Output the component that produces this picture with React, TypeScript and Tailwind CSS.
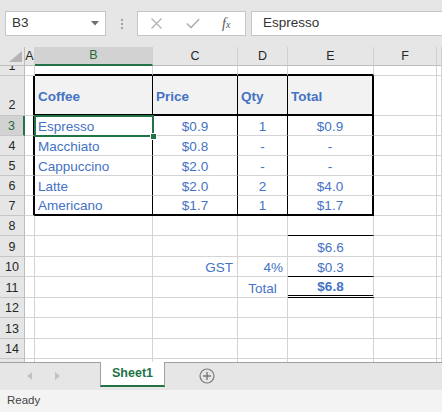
import clsx from 'clsx';

type Edge = 'g' | 'k' | 'K' | 'd';
type CellSpec = {
  t?: string;
  al?: 'l' | 'c' | 'r';
  bold?: boolean;
  r?: Edge;
  b?: Edge;
  bg?: boolean;
  sel?: boolean;
};

const COLW = ['w-[10px]', 'w-[118px]', 'w-[85px]', 'w-[50px]', 'w-[86px]', 'w-[63px]', 'flex-1'];
const LETTERS = ['A', 'B', 'C', 'D', 'E', 'F', 'G'];

const e: CellSpec = {};

// each row: height, bottom padding for text, cells A..G
const rows: { n: number; h: string; pb: string; cells: CellSpec[] }[] = [
  { n: 1, h: 'h-[10px]', pb: '', cells: [e, { b: 'K' }, { b: 'K' }, { b: 'K' }, { b: 'K' }, e, e] },
  {
    n: 2,
    h: 'h-[40px]',
    pb: 'pb-[9px]',
    cells: [
      { r: 'K' },
      { t: 'Coffee', bold: true, bg: true, r: 'k', b: 'K' },
      { t: 'Price', bold: true, bg: true, r: 'k', b: 'K' },
      { t: 'Qty', bold: true, bg: true, r: 'k', b: 'K' },
      { t: 'Total', bold: true, bg: true, r: 'K', b: 'K' },
      e,
      e,
    ],
  },
  {
    n: 3,
    h: 'h-[20px]',
    pb: '',
    cells: [
      { r: 'K' },
      { t: 'Espresso', r: 'k', sel: true },
      { t: '$0.9', al: 'c', r: 'k' },
      { t: '1', al: 'c', r: 'k' },
      { t: '$0.9', al: 'c', r: 'K' },
      e,
      e,
    ],
  },
  {
    n: 4,
    h: 'h-[20px]',
    pb: '',
    cells: [
      { r: 'K' },
      { t: 'Macchiato', r: 'k' },
      { t: '$0.8', al: 'c', r: 'k' },
      { t: '-', al: 'c', r: 'k' },
      { t: '-', al: 'c', r: 'K' },
      e,
      e,
    ],
  },
  {
    n: 5,
    h: 'h-[20px]',
    pb: '',
    cells: [
      { r: 'K' },
      { t: 'Cappuccino', r: 'k' },
      { t: '$2.0', al: 'c', r: 'k' },
      { t: '-', al: 'c', r: 'k' },
      { t: '-', al: 'c', r: 'K' },
      e,
      e,
    ],
  },
  {
    n: 6,
    h: 'h-[20px]',
    pb: '',
    cells: [
      { r: 'K' },
      { t: 'Latte', r: 'k' },
      { t: '$2.0', al: 'c', r: 'k' },
      { t: '2', al: 'c', r: 'k' },
      { t: '$4.0', al: 'c', r: 'K' },
      e,
      e,
    ],
  },
  {
    n: 7,
    h: 'h-[20px]',
    pb: '',
    cells: [
      { r: 'K' },
      { t: 'Americano', r: 'k', b: 'K' },
      { t: '$1.7', al: 'c', r: 'k', b: 'K' },
      { t: '1', al: 'c', r: 'k', b: 'K' },
      { t: '$1.7', al: 'c', r: 'K', b: 'K' },
      e,
      e,
    ],
  },
  { n: 8, h: 'h-[20px]', pb: '', cells: [e, e, e, e, { b: 'k' }, e, e] },
  { n: 9, h: 'h-[21px]', pb: '', cells: [e, e, e, e, { t: '$6.6', al: 'c' }, e, e] },
  {
    n: 10,
    h: 'h-[20px]',
    pb: '',
    cells: [e, e, { t: 'GST', al: 'r' }, { t: '4%', al: 'r' }, { t: '$0.3', al: 'c', b: 'k' }, e, e],
  },
  {
    n: 11,
    h: 'h-[21px]',
    pb: '',
    cells: [e, e, e, { t: 'Total', al: 'c' }, { t: '$6.8', al: 'c', bold: true, b: 'd' }, e, e],
  },
  { n: 12, h: 'h-[20px]', pb: '', cells: [e, e, e, e, e, e, e] },
  { n: 13, h: 'h-[21px]', pb: '', cells: [e, e, e, e, e, e, e] },
  { n: 14, h: 'h-[20px]', pb: '', cells: [e, e, e, e, e, e, e] },
  { n: 15, h: 'h-[20px]', pb: '', cells: [e, e, e, e, e, e, e] },
];

function Cell({ c, w, pb }: { c: CellSpec; w: string; pb: string }) {
  const right =
    c.r === 'K' ? 'border-r-2 border-r-black' : c.r === 'k' ? 'border-r border-r-black' : 'border-r border-r-[#d4d4d4]';
  const bottom =
    c.b === 'K'
      ? 'border-b-2 border-b-black'
      : c.b === 'k'
        ? 'border-b border-b-black'
        : c.b === 'd'
          ? 'border-b-[3px] border-double border-b-black'
          : 'border-b border-b-[#d4d4d4]';
  const align = c.al === 'c' ? 'justify-center' : c.al === 'r' ? 'justify-end pr-[4px]' : 'justify-start pl-[3px]';

  return (
    <div
      className={clsx(
        'relative flex items-end shrink-0 whitespace-nowrap',
        w,
        right,
        bottom,
        align,
        pb,
        c.bg ? 'bg-[#f2f2f2]' : 'bg-white'
      )}
    >
      {c.t && (
        <span className={clsx('leading-[16px] text-[13.5px] text-[#4472c4]', c.bold && 'font-bold')}>{c.t}</span>
      )}
      {c.sel && (
        <>
          <div className="pointer-events-none absolute -left-px -top-px -right-[2px] -bottom-[2px] z-10 border-2 border-[#217346]" />
          <div className="absolute -right-[5px] -bottom-[5px] z-20 h-[7px] w-[7px] border border-white bg-[#217346]" />
        </>
      )}
    </div>
  );
}

function RowHead({ n, sel }: { n: number; sel?: boolean }) {
  return (
    <div
      className={clsx(
        'flex w-[25px] shrink-0 items-end justify-center overflow-hidden border-b border-b-[#c6c6c6] text-[12.5px] leading-[16px]',
        sel
          ? 'border-r-2 border-r-[#217346] bg-[#d2d2d2] text-[#1e6b41]'
          : 'border-r border-r-[#bdbdbd] bg-[#e6e6e6] text-[#262626]',
        n === 2 ? 'pb-[2px]' : 'pb-px'
      )}
    >
      {n < 15 ? n : ''}
    </div>
  );
}

function Toolbar() {
  return (
    <div className="flex h-[47px] shrink-0 items-start bg-[#e6e6e6] pt-[11px]">
      {/* Name box */}
      <div className="ml-[5px] flex h-[25px] w-[101px] items-center justify-between border border-[#c6c6c6] bg-white pl-[6px] pr-[6px]">
        <span className="text-[13.5px] text-[#333]">B3</span>
        <svg width="8" height="5" viewBox="0 0 8 5">
          <polygon points="0,0 8,0 4,4.5" fill="#6e6e6e" />
        </svg>
      </div>
      <div className="ml-[15px] mt-[8px] flex flex-col gap-[2px]">
        <span className="h-[2px] w-[2px] bg-[#a0a0a0]" />
        <span className="h-[2px] w-[2px] bg-[#a0a0a0]" />
        <span className="h-[2px] w-[2px] bg-[#a0a0a0]" />
      </div>
      {/* Cancel / Enter / fx */}
      <div className="ml-[14px] flex h-[25px] w-[109px] items-center border border-[#c6c6c6] bg-white">
        <svg className="ml-[13px]" width="11" height="11" viewBox="0 0 11 11">
          <path d="M0.5 0.5 L10.5 10.5 M10.5 0.5 L0.5 10.5" stroke="#b0b0b0" strokeWidth="1.2" />
        </svg>
        <svg className="ml-[24px]" width="14" height="11" viewBox="0 0 14 11">
          <path d="M0.8 5.5 L5 9.6 L13.2 1" stroke="#b0b0b0" strokeWidth="1.5" fill="none" />
        </svg>
        <span className="ml-[22px] font-['Liberation_Serif',serif] text-[14px] italic text-[#555]">
          f<span className="text-[10px]">x</span>
        </span>
      </div>
      {/* Formula input */}
      <div className="ml-[5px] flex h-[25px] flex-1 items-center border border-r-0 border-[#c6c6c6] bg-white pl-[11px]">
        <span className="text-[13.5px] text-[#333]">Espresso</span>
      </div>
    </div>
  );
}

function ColumnHeaders() {
  return (
    <div className="flex h-[19px] shrink-0">
      <div className="flex w-[25px] shrink-0 items-end justify-end border-r border-b border-r-[#bdbdbd] border-b-[#bdbdbd] bg-[#e6e6e6] pr-[2px] pb-[3px]">
        <svg width="13" height="11" viewBox="0 0 13 11">
          <polygon points="13,0 13,11 0,11" fill="#b4b4b4" />
        </svg>
      </div>
      {LETTERS.map((l, i) => (
        <div
          key={l}
          className={clsx(
            'flex shrink-0 items-center justify-center border-r border-r-[#d0d0d0] text-[12.5px]',
            COLW[i],
            l === 'B'
              ? 'border-b-2 border-b-[#217346] bg-[#d2d2d2] text-[#1e6b41]'
              : 'border-b border-b-[#bdbdbd] bg-[#e6e6e6] text-[#262626]'
          )}
        >
          {l === 'G' ? '' : l}
        </div>
      ))}
    </div>
  );
}

function SheetTabs() {
  return (
    <div className="flex h-[28px] shrink-0 items-start border-t border-t-[#a0a0a0] bg-[#e6e6e6]">
      <div className="flex h-[26px] items-center">
        <svg className="ml-[27px]" width="5" height="8" viewBox="0 0 5 8">
          <polygon points="5,0 5,8 0,4" fill="#c2c2c2" />
        </svg>
        <svg className="ml-[23px]" width="5" height="8" viewBox="0 0 5 8">
          <polygon points="0,0 0,8 5,4" fill="#c2c2c2" />
        </svg>
      </div>
      <div className="-mt-px ml-[40px] flex h-[25px] w-[65px] items-center justify-center border-x border-x-[#a0a0a0] border-b-2 border-b-[#217346] bg-white">
        <span className="text-[12.5px] font-bold text-[#217346]">Sheet1</span>
      </div>
      <div className="flex h-[26px] items-center">
        <svg className="ml-[34px]" width="16" height="16" viewBox="0 0 16 16">
          <circle cx="8" cy="8" r="7" stroke="#7a7a7a" strokeWidth="1.2" fill="none" />
          <path d="M8 4 V12 M4 8 H12" stroke="#7a7a7a" strokeWidth="1.4" />
        </svg>
      </div>
    </div>
  );
}

export default function App() {
  return (
    <div className="flex h-[412px] w-[442px] flex-col overflow-hidden bg-white font-['Liberation_Sans',Arial,sans-serif]">
      <Toolbar />

      {/* Grid */}
      <div className="flex h-[315px] shrink-0 flex-col overflow-hidden">
        <ColumnHeaders />
        {rows.map((row) => (
          <div key={row.n} className={clsx('flex shrink-0', row.h)}>
            <RowHead n={row.n} sel={row.n === 3} />
            {row.cells.map((c, i) => (
              <Cell key={i} c={c} w={COLW[i]} pb={row.pb} />
            ))}
          </div>
        ))}
      </div>

      <SheetTabs />

      {/* Status bar */}
      <div className="flex h-[22px] shrink-0 items-center bg-[#f3f3f3] pl-[7px]">
        <span className="text-[11.5px] text-[#444]">Ready</span>
      </div>
    </div>
  );
}
